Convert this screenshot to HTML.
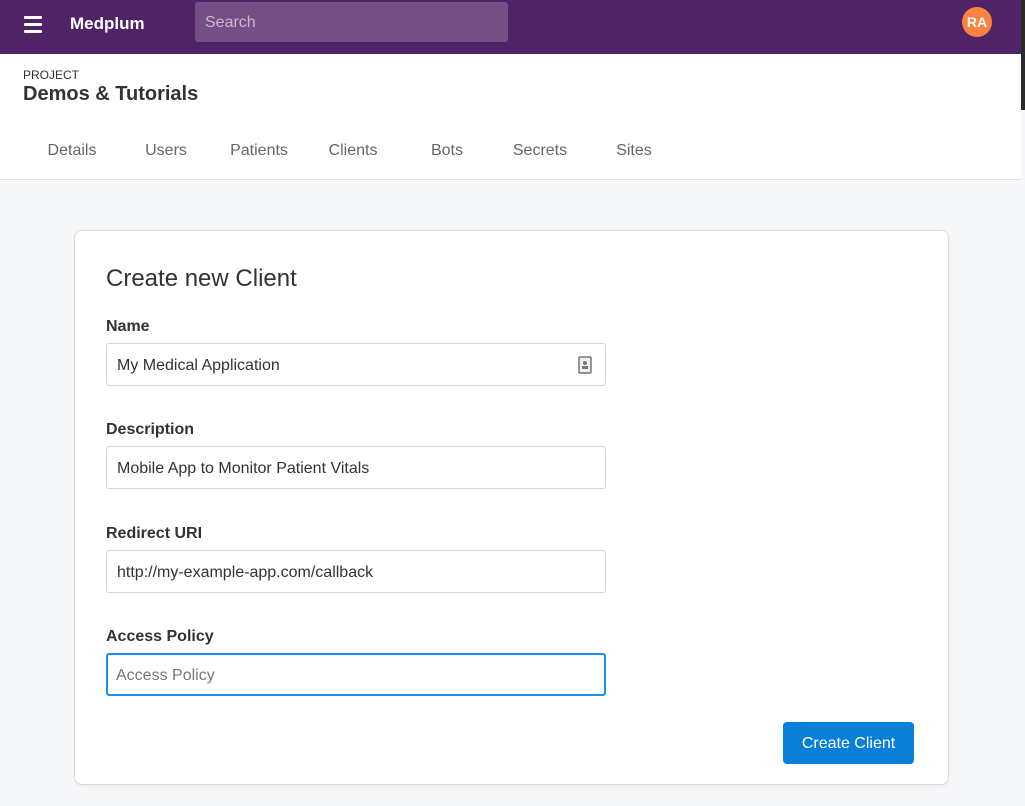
<!DOCTYPE html>
<html><head><style>
*{box-sizing:border-box;margin:0;padding:0}
body{width:1025px;height:806px;overflow:hidden;background:#f6f7f9;font-family:"Liberation Sans",sans-serif;color:#333;position:relative}
.hdr{position:absolute;left:0;top:0;width:1021px;height:54px;background:#4f2365}
.strip{position:absolute;left:1021px;top:0;width:4px;height:110px;background:#2a2a2a}
.burger{position:absolute;left:24px;top:16px;width:18px}
.burger i{display:block;height:3px;background:#fff;margin-bottom:4px;border-radius:1px}
.logo{position:absolute;left:70px;top:14px;color:#fff;font-weight:bold;font-size:17px}
.search{position:absolute;left:195px;top:2px;width:313px;height:40px;background:#744f86;border-radius:3px;color:#c8b9d0;font-size:16px;padding:12px 10px}
.av{position:absolute;left:962px;top:7px;width:30px;height:30px;border-radius:50%;background:#fb8240;color:#fff;font-weight:bold;font-size:14px;text-align:center;line-height:30px}
.top{position:absolute;left:0;top:54px;width:1021px;height:126px;background:#fff;border-bottom:1px solid #e2e2e2}
.proj{position:absolute;left:23px;top:14px;font-size:12px;color:#333}
.title{position:absolute;left:23px;top:29px;font-size:20px;font-weight:bold;color:#333}
.tab{position:absolute;top:88px;width:94px;text-align:center;font-size:16px;color:#666}
.card{position:absolute;left:74px;top:230px;width:875px;height:555px;background:#fff;border:1px solid #dcdcdc;border-radius:8px;box-shadow:0 1px 3px rgba(0,0,0,.06)}
h1{position:absolute;left:106px;top:265px;font-size:24px;font-weight:normal;color:#333}
.lbl{position:absolute;left:106px;font-size:16px;font-weight:bold;color:#333}
.inp{position:absolute;left:106px;width:500px;height:43px;border:1px solid #d6d6d6;border-radius:3px;font-size:16px;color:#333;padding:13px 10px 0;background:#fff}
.focus{border:2px solid #1a8ff0;color:#777;padding:12px 8px 0}
.btn{position:absolute;left:783px;top:722px;width:131px;height:42px;background:#0a7fd8;border-radius:4px;color:#fff;font-size:16px;text-align:center;line-height:44px}
</style></head><body>
<div class="hdr">
<div class="burger"><i></i><i></i><i></i></div>
<div class="logo">Medplum</div>
<div class="search">Search</div>
<div class="av">RA</div>
</div>
<div class="strip"></div>
<div class="top">
<div class="proj">PROJECT</div>
<div class="title">Demos &amp; Tutorials</div>
<div class="tab" style="left:25px">Details</div>
<div class="tab" style="left:119px">Users</div>
<div class="tab" style="left:212px">Patients</div>
<div class="tab" style="left:306px">Clients</div>
<div class="tab" style="left:400px">Bots</div>
<div class="tab" style="left:493px">Secrets</div>
<div class="tab" style="left:587px">Sites</div>
</div>
<div class="card"></div>
<h1>Create new Client</h1>
<div class="lbl" style="top:318px">Name</div>
<div class="inp" style="top:343px">My Medical Application
<svg style="position:absolute;right:13px;top:12px" width="14" height="18" viewBox="0 0 14 18"><rect x="1" y="1" width="12" height="16" rx="1" fill="#eee" stroke="#777" stroke-width="1.5"/><circle cx="7" cy="7" r="2" fill="#777"/><rect x="4" y="10" width="6" height="3" fill="#777"/></svg></div>
<div class="lbl" style="top:421px">Description</div>
<div class="inp" style="top:446px">Mobile App to Monitor Patient Vitals</div>
<div class="lbl" style="top:525px">Redirect URI</div>
<div class="inp" style="top:550px">http://my-example-app.com/callback</div>
<div class="lbl" style="top:628px">Access Policy</div>
<div class="inp focus" style="top:653px">Access Policy</div>
<div class="btn">Create Client</div>
</body></html>
